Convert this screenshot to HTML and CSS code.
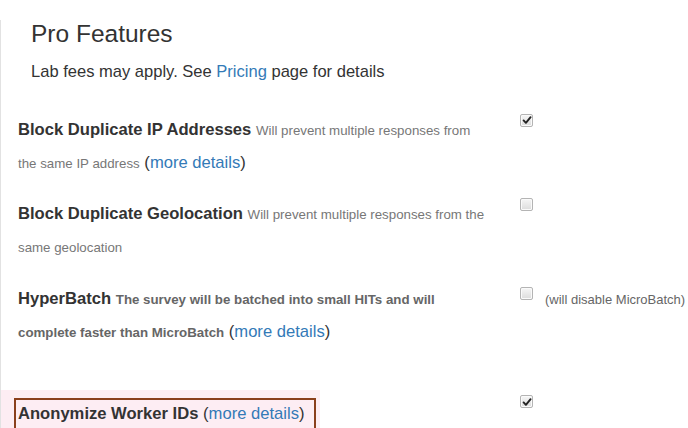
FILE: index.html
```html
<!DOCTYPE html>
<html>
<head>
<meta charset="utf-8">
<link rel="stylesheet" href="styles.css">
</head>
<body>
<div class="panel">
  <div class="header">
    <h3 class="title">Pro Features</h3>
    <p class="intro">Lab fees may apply. See <a href="#">Pricing</a> page for details</p>
  </div>

  <div class="row r1">
    <div class="label">
      <span class="name">Block Duplicate IP Addresses</span>
      <span class="desc">Will prevent multiple responses from the same IP address</span>
      <span class="more">(<a href="#">more details</a>)</span>
    </div>
    <div class="control">
      <span class="cb checked"><svg viewBox="0 0 12 12" width="12" height="12"><path d="M2.6 6.4 L4.9 8.8 L9.6 3.2" fill="none" stroke="#222" stroke-width="1.9" stroke-linecap="round" stroke-linejoin="round"/></svg></span>
    </div>
  </div>

  <div class="row r2">
    <div class="label">
      <span class="name">Block Duplicate Geolocation</span>
      <span class="desc">Will prevent multiple responses from the same geolocation</span>
    </div>
    <div class="control">
      <span class="cb"></span>
    </div>
  </div>

  <div class="row r3">
    <div class="label">
      <span class="name">HyperBatch</span>
      <span class="desc strong">The survey will be batched into small HITs and will complete faster than MicroBatch</span>
      <span class="more">(<a href="#">more details</a>)</span>
    </div>
    <div class="control">
      <span class="cb"></span>
      <span class="note">(will disable MicroBatch)</span>
    </div>
  </div>

  <div class="row r4">
    <div class="label">
      <div class="highlight">
        <span class="boxed"><span class="name">Anonymize Worker IDs</span> <span class="more">(<a href="#">more details</a>)</span></span>
      </div>
    </div>
    <div class="control">
      <span class="cb checked"><svg viewBox="0 0 12 12" width="12" height="12"><path d="M2.6 6.4 L4.9 8.8 L9.6 3.2" fill="none" stroke="#222" stroke-width="1.9" stroke-linecap="round" stroke-linejoin="round"/></svg></span>
    </div>
  </div>
</div>
</body>
</html>
```

FILE: styles.css
```css
html, body {
  margin: 0;
  padding: 0;
  background: #fff;
}
body {
  font-family: "Liberation Sans", Arial, sans-serif;
  color: #333;
  width: 688px;
  height: 428px;
  overflow: hidden;
}
a {
  color: #337ab7;
  text-decoration: none;
}
.panel {
  border-left: 1px solid #e2e2e2;
  height: 428px;
  box-sizing: border-box;
}
.header {
  padding-left: 30px;
}
.title {
  font-size: 24.5px;
  font-weight: normal;
  line-height: 27px;
  margin: 20px 0 0 0;
  color: #333;
}
.intro {
  font-size: 16.55px;
  line-height: 22px;
  margin: 13.5px 0 0 0;
}
.row {
  display: flex;
  align-items: flex-start;
}
.r1 { margin-top: 31px; }
.r2 { margin-top: 18px; }
.r3 { margin-top: 19px; }
.r4 { margin-top: 41.5px; }
.label {
  width: 469px;
  padding-left: 17px;
  font-size: 16.6px;
  line-height: 32px;
}
.name {
  font-weight: bold;
  color: #333;
}
.desc {
  font-size: 13.3px;
  color: #777;
}
.desc.strong {
  font-weight: bold;
  color: #666;
}
.more {
  color: #333;
}
.control {
  display: flex;
  align-items: flex-start;
  margin-left: 33px;
}
.cb {
  display: block;
  flex: none;
  width: 11px;
  height: 11px;
  border: 1px solid #b4b4b4;
  border-radius: 2px;
  background: linear-gradient(#f6f6f6, #dcdcdc);
  box-shadow: inset 0 0 0 1px #fafafa;
  margin-top: 0;
}
.cb svg {
  display: block;
  margin: -0.5px 0 0 0;
}
.r3 .cb { margin-top: 4px; }
.r4 .cb { margin-top: 5px; }
.note {
  font-size: 13px;
  color: #666;
  line-height: 32px;
  margin-left: 12px;
  margin-top: 1px;
  white-space: nowrap;
}
.highlight {
  display: inline-block;
  background: #fdedf3;
  margin-left: -17px;
  padding: 7.5px 4px 8px 13px;
}
.boxed {
  display: inline-block;
  border: 2px solid #8a3f1c;
  padding: 0 9px 0 2px;
  line-height: 28px;
}
```
